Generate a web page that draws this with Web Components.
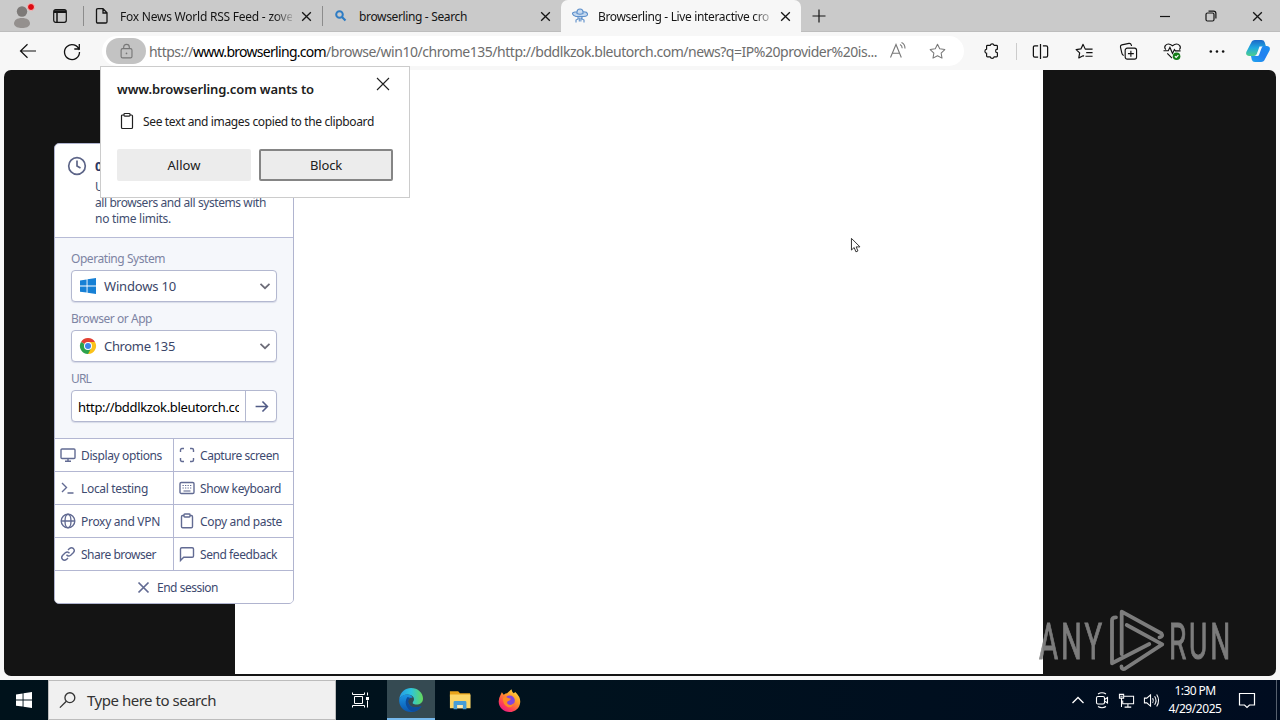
<!DOCTYPE html>
<html lang="en">
<head>
<meta charset="utf-8">
<title>Browserling - Live interactive cross-browser testing</title>
<style>
html,body{margin:0;width:1280px;height:720px;overflow:hidden;background:#f4f4f6}
body{font-family:"Noto Sans","Open Sans",sans-serif;font-size:12px;color:#111}
</style>
</head>
<body>
<desktop-screen></desktop-screen>
<script>
const define=(name,html,setup)=>{
  const t=document.createElement('template');t.innerHTML=html;
  customElements.define(name,class extends HTMLElement{
    constructor(){super();this.attachShadow({mode:'open'}).append(t.content.cloneNode(true));}
    connectedCallback(){if(setup)setup(this,this.shadowRoot);}
  });
};
const ICONS={
 avatar:['0 0 24 24','<g stroke="none"><circle cx="12" cy="7.500" r="5.200" fill="#7d7a78"/><path d="M4 20c0-4 3-6 8-6s8 2 8 6c-1 3-4 4-8 4s-7-1-8-4z" fill="#94908e"/></g>'],
 space:['0 0 16 16','<rect x="1.700" y="1.700" width="12.600" height="12.600" rx="2"/><path d="M2 4.300h12M2 3h12M5 4.500v9.500" stroke-width="1.500"/>'],
 page:['0 0 16 16','<path d="M3.500 .7h5.500l4 4v9q0 1.300-1.300 1.300H3.800q-1.300 0-1.300-1.300V2Q2.500 .7 3.800 .7M9 .9V5h4" stroke-width="1.300"/>'],
 lens:['0 0 16 16','<circle cx="6.500" cy="6.500" r="3.300" stroke="#2e7cc4" stroke-width="2"/><path d="M9 9l3.500 3.500" stroke="#2e7cc4" stroke-width="2.200"/>'],
 ufo:['0 0 16 16','<g stroke="#5d8fca" stroke-width="1.100" fill="#c2d7ef"><path d="M5 4q0-3 3-3t3 3M5 3.800q-5 .2-4.500 2T4 8.500h8q4-.5 3.500-2.700T11 3.800M5 4v1.500q3 1.500 6 0V4" /><path d="M6 9v2l-2 1v2.500M10 9v2l2 1v2.500M7.300 9.500v4M8.900 9.500v4" fill="none"/></g>'],
 x:['0 0 12 12','<path d="M2 2l8 8M10 2l-8 8"/>'],
 plus:['0 0 16 16','<path d="M8 1.500v13M1.500 8h13"/>'],
 min:['0 0 12 12','<path d="M1 6.500h10"/>'],
 restore:['0 0 12 12','<rect x="1" y="3" width="8" height="8" rx="1.500"/><path d="M3.500 1.200H8.500q2.400 0 2.400 2.400V8.500"/>'],
 back:['0 0 20 20','<path d="M18 10H2.500M9.500 3.200L2.500 10l7 6.800" stroke-width="1.200"/>'],
 reload:['0 0 20 20','<path d="M17.200 9A7.500 7.500 0 1 0 17.500 11M17.300 3v5h-5" stroke-width="1.300"/>'],
 lock:['0 0 16 18','<rect x="2.300" y="6" width="11.500" height="9.800" rx="1.600"/><path d="M5 6V4.500q0-3 3-3t3 3V6"/><circle cx="8" cy="11" r=".9" fill="currentColor" stroke="none"/>'],
 read:['0 0 20 20','<path d="M2.500 16.500L8 3.500l5.300 13M4.300 12.300h7.500M12 3.500q2.200 1 2.200 3.700M13.500 1.500q3.500 1.500 3.500 5.900"/>'],
 star:['0 0 20 20','<path d="M10 2.300l2.350 4.850 5.350.75-3.900 3.700.95 5.350L10 14.400l-4.750 2.550.95-5.350L2.300 7.900l5.350-.75z" stroke-linejoin="round"/>'],
 puzzle:['0 0 20 20','<path d="M5 3.800h3a2.300 2.300 0 0 1 4.400 0H15q1 0 1 1V8a2 2 0 0 0 0 4v3.600q0 1-1 1h-2.600a2.300 2.300 0 0 1-4.400 0H5q-1 0-1-1V12.600a2.400 2.400 0 0 1 0-4.700V4.800q0-1 1-1z" stroke-width="1.300"/>'],
 split:['0 0 20 20','<path d="M10 2v16M7.500 4H4Q2.500 4 2.500 5.500v9Q2.500 16 4 16h3.500M12.500 4H16q1.500 0 1.500 1.500v9q0 1.500-1.500 1.500h-3.500" stroke-width="1.300"/>'],
 favs:['0 0 20 20','<path d="M11.300 7.500h-.5L8.500 2.500 6.200 7.300 1.200 8l3.700 3.500-.9 5.300 4.500-2.400 1 .5M11.300 7.500h7.200M11.800 11.200h6.700M11 15h7.500" stroke-width="1.250" stroke-linejoin="round"/>'],
 coll:['0 0 20 20','<rect x="6.500" y="6.500" width="12" height="11.500" rx="2.200"/><path d="M12.500 9.200v6.200M9.400 12.250h6.200M5 14.300q-1.700-.6-2-2.500L1.500 5.200Q1.400 3.300 3 3l7.500-1.500q2-.2 2.500 1.700l.2 1" stroke-width="1.200"/>'],
 heart:['0 0 20 20','<path d="M3 8Q1 6 2.400 3.800 5.500 .3 10 4q4.500-3.700 7.600-.2 1.500 2.400-.4 4.200M4.500 12l5 5M.5 9.200h5l1.800-3.500 2.700 6.300 2-4 1 1.300h5.500" stroke-width="1.200"/><circle cx="14.300" cy="15" r="4" fill="#147d18" stroke="none"/><path d="M12.500 15l1.400 1.300 2.300-2.500" stroke="#fff"/>'],
 dots:['0 0 20 20','<g fill="currentColor" stroke="none"><circle cx="4" cy="10" r="1.350"/><circle cx="10.500" cy="10" r="1.350"/><circle cx="17" cy="10" r="1.350"/></g>'],
 copilot:['0 0 24 24','<defs><linearGradient id="a" x1="0" y1="0" x2="0" y2="1"><stop stop-color="#1b68c8"/><stop offset=".5" stop-color="#1fa8e0"/><stop offset="1" stop-color="#4dce8b"/></linearGradient><linearGradient id="b" x1="1" y1="0" x2="0" y2="1"><stop stop-color="#1a8ff0"/><stop offset=".5" stop-color="#2280f0"/><stop offset="1" stop-color="#1fa5ee"/></linearGradient></defs><g stroke="none"><path d="M5 4Q6 1 9 1h6.500q2.500 0 3.200 2.300L20 7.500h-3.500q-2.500 0-3.300 2.500L11 15q-.7 2-3 2H3Q-.7 16.500.3 13z" fill="url(#a)"/><path d="M19 20q-1 3-4 3H9q-2.500 0-3.200-2.300L5 17H8q2.500 0 3.300-2.500l2.100-5.500q.8-2 3-2H21q3.700.5 2.700 4.200z" fill="url(#b)"/><path d="M13.500 7.500h3.200q-1 .8-1.500 2.500L13 16q-.5 1-1.500 1H8.800q1.500-.5 2-2z" fill="#f4f9fc"/></g>'],
 clip:['0 0 16 18','<path d="M5 3H3.500Q2.500 3 2.500 4v11.500q0 1 1 1h9q1 0 1-1V4q0-1-1-1H11"/><rect x="5" y="1.500" width="6" height="2.600" rx=".8"/>'],
 clock:['0 0 20 20','<circle cx="10" cy="10" r="8.300" stroke-width="1.700"/><path d="M10 4.500V10l3.500 2" stroke-width="1.700"/>'],
 win:['0 0 18 18','<g stroke="none"><path d="M1 3.500l6.600-1v6.100H1zM8.500 2.350L17 1v7.600H8.500zM1 9.500h6.600v6.100L1 14.700zM8.500 9.500H17V17l-8.500-1.200z" fill="var(--win,#1680d5)"/></g>'],
 chrome:['0 0 18 18','<g stroke="none"><path d="M9 9L2 5A8 8 0 0 1 16 5.100z" fill="#e34133"/><path d="M9 9V5h7a8 8 0 0 1-7 12z" fill="#fbc21a"/><path d="M9 9l3.300 2L9 17A8 8 0 0 1 2 5z" fill="#2da24c"/><circle cx="9" cy="9" r="4" fill="#fff"/><circle cx="9" cy="9" r="3" fill="#3e84ea"/></g>'],
 chev:['0 0 12 12','<path d="M1.500 3.800L6 8.200l4.500-4.400" stroke-width="1.700"/>'],
 arrow:['0 0 16 16','<path d="M1.700 8h12.300M9 2.700L14.300 8 9 13.300" stroke-width="1.700"/>'],
 monitor:['0 0 16 16','<rect x="1" y="2" width="14" height="9.500" rx="1"/><path d="M8 11.500V14M5 14.300h6"/>'],
 capture:['0 0 16 16','<path d="M1.500 5V3q0-1.500 1.500-1.500h2M11 1.500h2q1.500 0 1.500 1.500v2M14.500 11v2q0 1.500-1.500 1.500h-2M5 14.500H3q-1.500 0-1.500-1.500v-2"/>'],
 term:['0 0 16 16','<path d="M2 3l4.500 4.500L2 12M7.500 13h6"/>'],
 keys:['0 0 16 16','<rect x="1" y="2.500" width="14" height="11" rx="1.300"/><path d="M3.500 5.500h9M3.500 8h9" stroke-width="1.200" stroke-dasharray="1.300 1.200"/><path d="M4.500 11h7" stroke-width="1.100"/>'],
 globe:['0 0 16 16','<circle cx="8" cy="8" r="6.800"/><ellipse cx="8" cy="8" rx="3" ry="6.800"/><path d="M1.200 8h13.600"/>'],
 paste:['0 0 16 16','<path d="M5 2.500H3.700q-1.200 0-1.200 1.200v9.800q0 1.200 1.200 1.200h8.600q1.200 0 1.200-1.200V3.700q0-1.200-1.200-1.200H11"/><rect x="5" y="1" width="6" height="3" rx=".7"/>'],
 link:['0 0 16 16','<path d="M6.500 8.800q1.800 2.300 4.200.5l2.800-2.800q1.700-2 0-3.900-2-1.700-4 0L8 4.100M9.500 7.200q-1.800-2.300-4.200-.5L2.500 9.500q-1.700 2 0 3.900 2 1.700 4 0L8 11.900"/>'],
 chat:['0 0 16 16','<path d="M1.500 14.500V3q0-1.300 1.300-1.300h10.400q1.300 0 1.300 1.300v7q0 1.300-1.300 1.300H4.700z"/>'],
 search:['0 0 20 20','<circle cx="12.500" cy="7" r="5.200"/><path d="M8.800 10.700L2 17.500"/>'],
 task:['0 0 18 18','<path d="M3.500 5.500h8v7h-8zM1.500 1.500v2h12v-2M1.500 16.500v-2h12v2M16.500 1.500v3M16.500 9.500v7" stroke-width="1"/><path d="M15 6h3v3h-3z" fill="currentColor" stroke="none"/>'],
 edge:['0 0 24 24','<defs><linearGradient id="e" x1="0" y1=".5" x2="1" y2=".5"><stop stop-color="#259be5"/><stop offset=".5" stop-color="#2dc4dd"/><stop offset="1" stop-color="#65d959"/></linearGradient><linearGradient id="f" x1="0" y1="0" x2="0" y2="1"><stop stop-color="#1b96e4"/><stop offset="1" stop-color="#0a56b0"/></linearGradient></defs><g stroke="none"><path d="M.3 10.500C1.500 4 6.500 0 12 0c7 0 12 5 12 10.500 0 4-3 6-6.500 6-3 0-4.500-1-3.500-2.500C17 10 13 6.500 8.500 6.500Q4 6.500.3 10.500z" fill="url(#e)"/><path d="M.3 10.500Q4 6 8.500 6.500c2.500.2 5 1.500 5 3.500-3-1-5.500 2-4 5.500C11.500 20 17 20.500 22.500 18 19.500 22.500 16 24 12 24 4.500 24-.8 18 .3 10.500z" fill="url(#f)"/><path d="M8.500 9C4.500 14 7.500 22 14 23.700 18 23.500 21 21 22.500 18 17 20.500 11 19.500 9.700 15.500 8.700 13 10 10.500 11.500 9.900z" fill="#0d4c9c"/></g>'],
 folder:['0 0 24 24','<g stroke="none"><path d="M1 2.500h9l2 2h11v4H1z" fill="#e9a41a"/><path d="M1 6h22.500v15H1z" fill="#fcd667"/><path d="M5 22v-7.500q0-1.500 1.500-1.500h11q1.500 0 1.500 1.500V22h-4v-4.500H9V22z" fill="#479ed8"/><path d="M9 17.500h6v3.500H9z" fill="#fbeab5"/></g>'],
 firefox:['0 0 24 24','<defs><linearGradient id="g" x1=".9" y1="0" x2=".2" y2="1"><stop stop-color="#ffe548"/><stop offset=".4" stop-color="#ff9a28"/><stop offset=".75" stop-color="#ff4056"/><stop offset="1" stop-color="#e3168b"/></linearGradient></defs><g stroke="none"><path d="M2.500 6.500L4 3.500 6 6q2-1.500 3.500-1.500L14 .3q.5 2.700 2.500 4.200L18 3q5.500 5 5.200 10.500C22.800 20 18 24 12 24S.8 19.500.7 13q0-3.500 1.800-6.500z" fill="url(#g)"/><circle cx="12.300" cy="12" r="5.300" fill="#8346dc"/><path d="M5 9.500q3-2.500 5.500 0l3 .8q-.5 2-3 2.200-2 1.700 0 3.500 3.500 2 6-1.500Q15 20 10.500 19 5 17 5 9.500z" fill="#ff8a23"/></g>'],
 up:['0 0 16 16','<path d="M2.500 11L8 5.500l5.500 5.500" stroke-width="1.300"/>'],
 meet:['0 0 16 16','<path d="M4 2Q8-.5 12 2M4 14.500q4 2.500 8 0"/><rect x="2.500" y="4.500" width="8" height="7.500" rx="1.500"/><path d="M10.500 7.500l3-2v5.500l-3-2" />'],
 net:['0 0 18 18','<path d="M6.500 4.500h10v8H5V9M10.500 12.500v3M7 16h7M1.500 2.500h4.500v4H1.500zM3.700 6.500v9.500M2.500 4.500h2.500"/>'],
 vol:['0 0 18 18','<path d="M1.500 6.500H4l4-3.500v12L4 11.500H1.500zM10.200 6.500q1.500 2.500 0 5M12.300 4.500q3 4.500 0 9M14.500 2.700q4 6.300 0 12.600"/>'],
 note:['0 0 18 18','<path d="M1.500 2.500h15v11.500h-5L9 16.500 6.500 14h-5z" stroke-width="1.200"/>'],
 cursor:['0 0 12 20','<path d="M1.500 1.500v13l3-2.800 2 4.800 2.200-1-2-4.500H11z" fill="#fff" stroke="#333" stroke-width="1.100"/>']
};
define('ui-icon',`<style>:host{display:block;flex:none;width:var(--s,16px);height:var(--s,16px)}svg{display:block;width:100%;height:100%;fill:none;stroke:currentColor;stroke-width:var(--w,1.2);overflow:visible}</style><svg></svg>`,(h,r)=>{
 const[v,p]=ICONS[h.getAttribute('name')],s=r.querySelector('svg');s.setAttribute('viewBox',v);s.innerHTML=p;
 const z=h.getAttribute('size');if(z)h.style.setProperty('--s',z+'px');
});
/* A one-line label tracked so that its run takes the given width. */
define('ui-label',`<style>:host{display:block;flex:none;white-space:pre}span{display:inline-block}</style><span><slot></slot></span>`,(h,r)=>{
 const w=+h.getAttribute('width'),n=h.textContent.length,s=r.querySelector('span');
 if(w){s.style.letterSpacing=((w-s.getBoundingClientRect().width)/n)+'px';h.style.width=w+'px';}
});
define('browser-tab',`<style>
:host{display:flex;align-items:center;width:239px;height:32px;box-sizing:border-box;padding:0 9px 0 10px;border-left:1px solid transparent;position:relative}
:host::before{content:"";position:absolute;left:-1px;top:6px;height:20px;width:1px;background:#8c8c8c}
:host([active])::before{display:none}
:host([active]){background:#f7f7f7;border-radius:7px 7px 0 0;width:240px}
.t{margin-left:10px;width:173px;overflow:hidden}
:host([fade]) .t{-webkit-mask-image:linear-gradient(90deg,#000 90%,rgba(0,0,0,.2) 100%)}
.x{margin-left:8px;--w:1.2}
</style><slot name="icon"></slot><div class="t"><slot></slot></div><ui-icon class="x" name="x" size="13"></ui-icon>`);
define('tab-strip',`<style>
:host{display:flex;align-items:center;height:32px;background:#cacaca;box-shadow:inset 0 -1px #bdbdbd;font-size:12px;color:#151515}
.left{display:flex;align-items:center;width:83px;box-sizing:border-box;padding-left:10px;gap:18px}
.av{position:relative}.av i{position:absolute;right:-1px;top:-1px;width:6px;height:6px;border-radius:50%;background:#dc0b12;border:1px solid #f7bcbc}
.plus{margin-left:10px}.ctl{margin-left:auto;display:flex;gap:34px;padding-right:16px}
</style>
<div class="left"><div class="av"><ui-icon name="avatar" size="24"></ui-icon><i></i></div><ui-icon name="space"></ui-icon></div>
<browser-tab fade><ui-icon slot="icon" name="page"></ui-icon><ui-label width="173">Fox News World RSS Feed - zove</ui-label></browser-tab>
<browser-tab><ui-icon slot="icon" name="lens"></ui-icon><ui-label width="108">browserling - Search</ui-label></browser-tab>
<browser-tab active fade><ui-icon slot="icon" name="ufo"></ui-icon><ui-label width="171">Browserling - Live interactive cro</ui-label></browser-tab>
<ui-icon class="plus" name="plus"></ui-icon>
<div class="ctl"><ui-icon name="min" size="12"></ui-icon><ui-icon name="restore" size="12"></ui-icon><ui-icon name="x" size="13"></ui-icon></div>`);
define('address-bar',`<style>
:host{display:flex;align-items:center;width:862px;height:30px;border-radius:15px;background:#fff;font-size:14px;color:#6d6d6d;box-sizing:border-box;padding-left:4px}
.lock{width:40px;height:26px;border-radius:13px;background:#c3c3c3;display:grid;place-items:center;margin-right:3px;color:#777}
.host{color:#000}.i{margin-left:11px;color:#777;--w:1.1}.i+.i{margin-left:20px}
</style><div class="lock"><ui-icon name="lock" size="17"></ui-icon></div><ui-label width="44">https://</ui-label><ui-label class="host" width="133">www.browserling.com</ui-label><ui-label width="551">/browse/win10/chrome135/http://bddlkzok.bleutorch.com/news?q=IP%20provider%20is...</ui-label><ui-icon class="i" name="read" size="20"></ui-icon><ui-icon class="i" name="star" size="19"></ui-icon>`);
define('tool-bar',`<style>
:host{display:flex;align-items:center;height:38px;background:#f7f7f7}
.nav{display:flex;gap:24px;padding-left:18px;width:84px}.c{width:44px;display:grid;place-items:center}.g{display:flex;align-items:center;margin-left:6px}.sep{width:1px;height:17px;background:#ccc;margin:0 1px 0 2px}.cp{margin-left:8px}
</style><div class="nav"><ui-icon name="back" size="20"></ui-icon><ui-icon name="reload" size="20"></ui-icon></div><address-bar></address-bar>
<div class="g"><div class="c"><ui-icon name="puzzle" size="18"></ui-icon></div><div class="sep"></div><div class="c"><ui-icon name="split" size="19"></ui-icon></div><div class="c"><ui-icon name="favs" size="19"></ui-icon></div><div class="c"><ui-icon name="coll" size="19"></ui-icon></div><div class="c"><ui-icon name="heart" size="19"></ui-icon></div><div class="c"><ui-icon name="dots" size="19"></ui-icon></div><ui-icon class="cp" name="copilot" size="24"></ui-icon></div>`);
define('select-field',`<style>
:host{display:block;height:60px;color:#3b4668}
.l{font-size:12px;line-height:16px;color:#7d84a3;height:19px}
.b{height:32px;box-sizing:border-box;border:1px solid #b3b8d0;border-radius:4px;background:#fff;display:flex;align-items:center;padding:0 5px 0 7px;font-size:13px;box-shadow:0 1px 1px #d8dbe8}
.v{margin-left:7px;flex:1}.c{color:#6c6c78}
</style><div class="l"><slot name="label"></slot></div><div class="b"><slot name="icon"></slot><div class="v"><slot></slot></div><ui-icon class="c" name="chev" size="12"></ui-icon></div>`);
define('url-field',`<style>
:host{display:block}.l{font-size:12px;line-height:16px;color:#7d84a3;height:19px}
.b{height:32px;box-sizing:border-box;border:1px solid #b3b8d0;border-radius:4px;background:#fff;display:flex;box-shadow:0 1px 1px #d8dbe8}
.v{margin-left:6px;width:161px;overflow:hidden;font-size:13px;line-height:33px;color:#000}.go{margin-left:auto;width:30px;border-left:1px solid #b3b8d0;display:grid;place-items:center;color:#515b86}
</style><div class="l"><ui-label width="20">URL</ui-label></div><div class="b"><div class="v"><ui-label width="164">http://bddlkzok.bleutorch.co</ui-label></div><div class="go"><ui-icon name="arrow" size="15"></ui-icon></div></div>`);
define('panel-action',`<style>:host{display:flex;align-items:center;height:32px;gap:5px;padding-left:5px;background:#fff;font-size:12px;color:#3e4a70;--w:1.4;--c:#626b93}::slotted(ui-icon){color:#626b93}:host([center]){grid-column:1/-1;padding-left:81px;gap:6px}</style><slot name="icon"></slot><slot></slot>`);
define('control-panel',`<style>
:host{display:block;width:238px;height:459px;border:1px solid #b0b4cf;border-radius:5px;background:#fff;overflow:hidden;font-size:12px;color:#424e70}
.h{height:94px;box-sizing:border-box;padding:12px 0 0 12px;display:flex;gap:8px;border-bottom:1px solid #b7bbd6;line-height:16px}
.h>ui-icon{color:#5d6588}b{display:block;font-size:13px;line-height:18px;margin:1px 0 4px;color:#2c3764}
.f{background:#f5f7fb;height:200px;box-sizing:border-box;padding:13px 16px 0}
.g{display:grid;grid-template-columns:118px 1fr;gap:1px;background:#b3b7d2;border-top:1px solid #b3b7d2}
</style>
<div class="h"><ui-icon name="clock" size="20"></ui-icon><div><b>01:12 left</b><ui-label>Upgrade to access</ui-label><ui-label width="171">all browsers and all systems with</ui-label><ui-label width="76">no time limits.</ui-label></div></div>
<div class="f"><select-field><ui-label slot="label" width="94">Operating System</ui-label><ui-icon slot="icon" name="win" size="18"></ui-icon><ui-label width="72">Windows 10</ui-label></select-field>
<select-field><ui-label slot="label" width="81">Browser or App</ui-label><ui-icon slot="icon" name="chrome" size="18"></ui-icon><ui-label width="71">Chrome 135</ui-label></select-field><url-field></url-field></div>
<div class="g">
<panel-action><ui-icon slot="icon" name="monitor"></ui-icon><ui-label width="81">Display options</ui-label></panel-action>
<panel-action><ui-icon slot="icon" name="capture"></ui-icon><ui-label width="79">Capture screen</ui-label></panel-action>
<panel-action><ui-icon slot="icon" name="term"></ui-icon><ui-label width="67">Local testing</ui-label></panel-action>
<panel-action><ui-icon slot="icon" name="keys"></ui-icon><ui-label width="81">Show keyboard</ui-label></panel-action>
<panel-action><ui-icon slot="icon" name="globe"></ui-icon><ui-label width="79">Proxy and VPN</ui-label></panel-action>
<panel-action><ui-icon slot="icon" name="paste"></ui-icon><ui-label width="82">Copy and paste</ui-label></panel-action>
<panel-action><ui-icon slot="icon" name="link"></ui-icon><ui-label width="75">Share browser</ui-label></panel-action>
<panel-action><ui-icon slot="icon" name="chat"></ui-icon><ui-label width="77">Send feedback</ui-label></panel-action>
<panel-action center><ui-icon slot="icon" name="x" size="15"></ui-icon><ui-label width="61">End session</ui-label></panel-action></div>`);
define('permission-dialog',`<style>
:host{display:block;box-sizing:border-box;width:310px;height:132px;border:1px solid #ccc;background:#fff;padding:10px 16px 0;color:#202020}
.t{display:flex;justify-content:space-between;height:34px}.t ui-label{font-weight:600;font-size:13px;line-height:24px}.t ui-icon{margin-right:1px;margin-top:-2px;--w:.75}
.m{display:flex;gap:7px;align-items:center;height:20px;padding-left:1px;margin-bottom:18px}
.b{display:grid;grid-template-columns:1fr 1fr;gap:8px}.k{height:32px;box-sizing:border-box;border-radius:2px;background:#ececec;display:grid;place-items:center;font-size:13px;border:2px solid #ececec}.k.on{border-color:#858585}
</style><div class="t"><ui-label width="197">www.browserling.com wants to</ui-label><ui-icon name="x" size="18"></ui-icon></div>
<div class="m"><ui-icon name="clip" size="18"></ui-icon><ui-label width="231">See text and images copied to the clipboard</ui-label></div>
<div class="b"><div class="k"><ui-label width="33">Allow</ui-label></div><div class="k on"><ui-label width="32">Block</ui-label></div></div>`);
define('any-run-mark',`<style>:host{display:block;width:210px;height:66px}svg{display:block;overflow:visible;font:400 50px Roboto,sans-serif;letter-spacing:5px}</style>
<svg width="210" height="66" viewBox="0 0 210 66"><g opacity=".92"><g fill="#858585" stroke="#858585" stroke-width="1"><text x="2" y="52" textLength="66" lengthAdjust="spacingAndGlyphs">ANY</text><text x="132" y="52" textLength="64" lengthAdjust="spacingAndGlyphs">RUN</text></g><g fill="none" stroke="#858585" stroke-width="3.800" stroke-linejoin="round" stroke-linecap="round"><path d="M84.700 47V4.700L124.500 26.500q2 3-2 3.800M89.700 18L125.300 37.300 87.500 62q-3 .5-3-2.500M79 10.300q-4 0-4 3v43L112.300 37"/></g></g></svg>`);
define('page-stage',`<style>
:host{display:flex;height:606px;margin:0 4px;background:#141414;border-radius:7px;position:relative;overflow:visible}
.page{margin-left:231px;width:808px;height:604px;background:#fff}
control-panel{position:absolute;left:50px;top:73px}permission-dialog{position:absolute;left:96px;top:-4px}
.cur{position:absolute;left:846px;top:167px;width:11px;height:18px}any-run-mark{position:absolute;left:1033px;top:537px}
</style><div class="page"></div><control-panel></control-panel><any-run-mark></any-run-mark><permission-dialog></permission-dialog><ui-icon class="cur" name="cursor"></ui-icon>`);
define('task-bar',`<style>
:host{display:flex;height:40px;margin-top:4px;background:linear-gradient(90deg,#00121b,#00121e 45%,#000c20);color:#fff}
.c{width:48px;display:grid;place-items:center}.st{--win:#fff}.s{width:288px;background:#f0f0f0;box-sizing:border-box;border:1px solid #bcbcbc;color:#333;display:flex;align-items:center;padding-left:9px;gap:10px;font-size:15px;--w:1.4}
.tv{width:48px;margin-right:3px}.on{background:#354a52;box-shadow:inset 0 -2px #76b9ed}.n{margin-left:1px}
.r{margin-left:auto;display:flex;align-items:center}.tray{display:flex;align-items:center;gap:8px;margin-right:9px;--w:1.1}.clk{font-size:12px;line-height:18px;width:52px;display:flex;flex-direction:column;align-items:center}.nt{margin-left:17px;margin-right:20px}.end{width:4px;height:40px;box-sizing:border-box;border-left:1px solid #56606e}
</style><div class="c st"><ui-icon name="win" size="18"></ui-icon></div><div class="s"><ui-icon name="search" size="19"></ui-icon><ui-label width="129">Type here to search</ui-label></div><div class="c tv"><ui-icon name="task" size="18"></ui-icon></div><div class="c on"><ui-icon name="edge" size="24"></ui-icon></div><div class="c n"><ui-icon name="folder" size="22"></ui-icon></div><div class="c n"><ui-icon name="firefox" size="23"></ui-icon></div>
<div class="r"><div class="tray"><ui-icon name="up"></ui-icon><ui-icon name="meet"></ui-icon><ui-icon name="net" size="17"></ui-icon><ui-icon name="vol" size="17"></ui-icon></div><div class="clk"><ui-label width="41">1:30 PM</ui-label><ui-label width="53">4/29/2025</ui-label></div><ui-icon class="nt" name="note" size="18"></ui-icon><div class="end"></div></div>`);
define('desktop-screen',`<style>:host{display:flex;flex-direction:column;width:1280px;height:720px;background:#f7f7f7}</style><tab-strip></tab-strip><tool-bar></tool-bar><page-stage></page-stage><task-bar></task-bar>`);
</script>
</body>
</html>
